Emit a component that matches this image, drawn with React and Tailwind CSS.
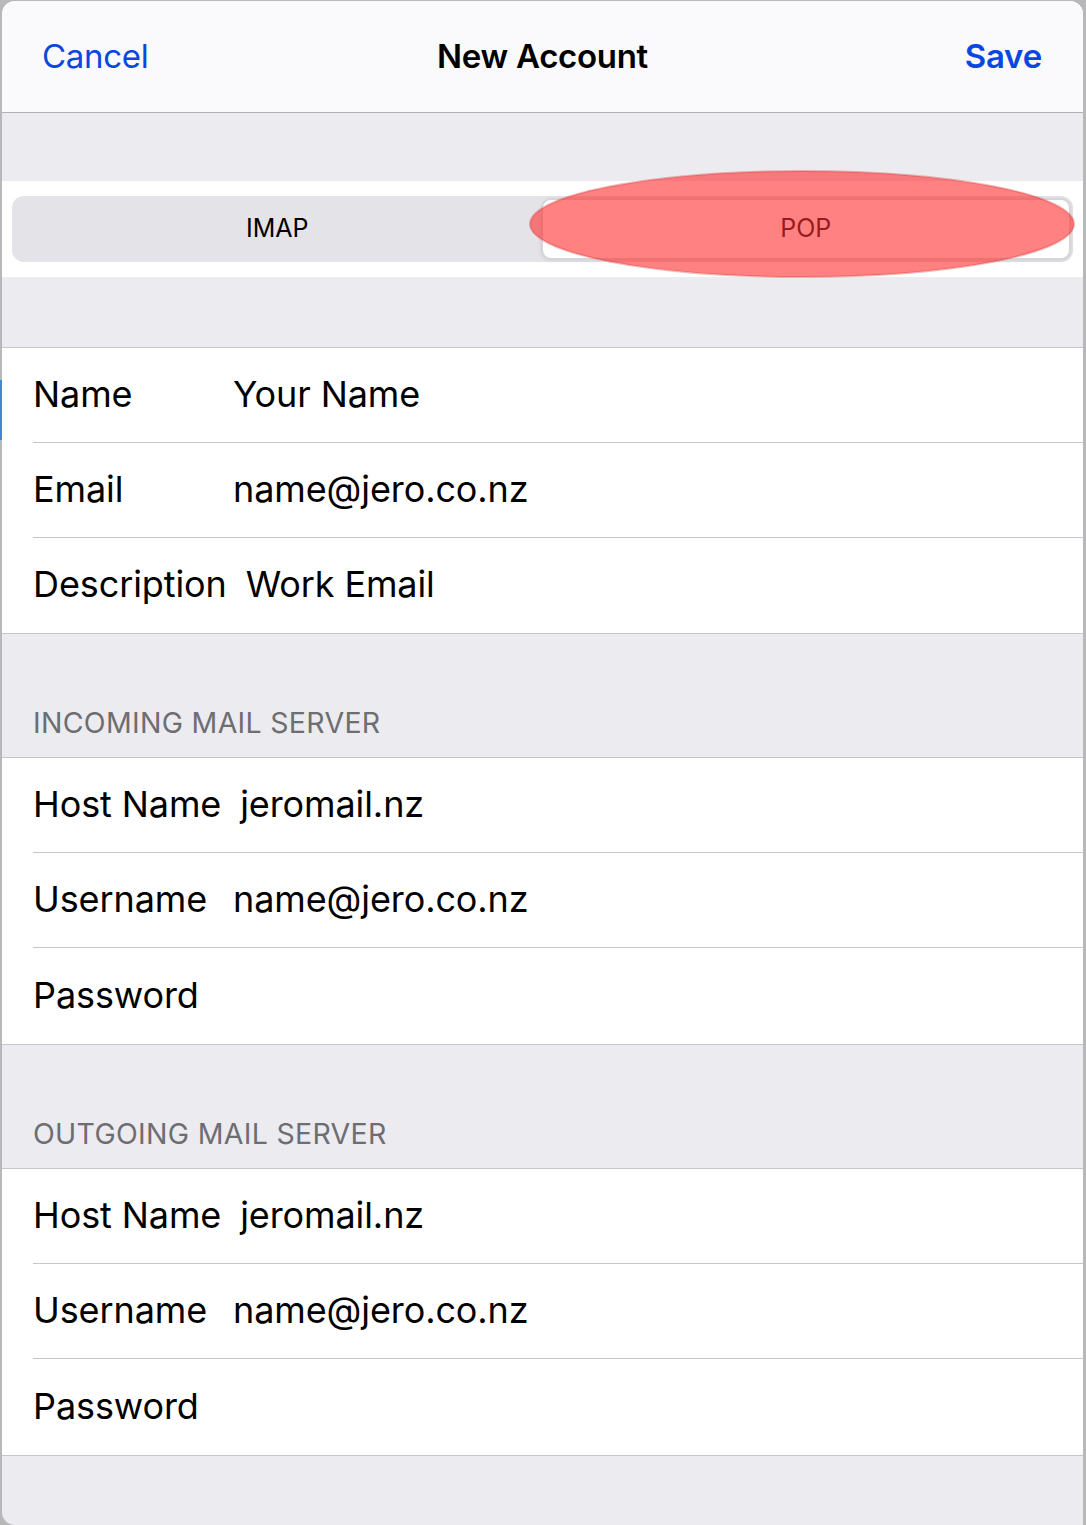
import React from 'react'

const font = { fontFamily: 'Inter, "Noto Sans", sans-serif' }

const Row = ({ label, value, last, tall }) => (
    <div className="pl-[31px] bg-white">
        <div className={`${tall ? 'h-[96px]' : 'h-[95px]'} flex items-center pb-[3px] ${last ? '' : 'border-b border-[#c6c6c8]'}`}>
            <span className="min-w-[181px] mr-[19px] text-[36px] text-black whitespace-nowrap tracking-[-0.1px]">{label}</span>
            <span className="text-[36px] text-black whitespace-nowrap tracking-[-0.1px]">{value}</span>
        </div>
    </div>
)

const Group = ({ rows, tallLast }) => (
    <div className="border-t border-b border-[#c6c6c8]">
        {rows.map((r, i) => (
            <Row
                key={r[0]}
                label={r[0]}
                value={r[1]}
                last={i === rows.length - 1}
                tall={tallLast && i === rows.length - 1}
            />
        ))}
    </div>
)

const SectionHeader = ({ children }) => (
    <div className="h-[123px] flex items-end pl-[31px] pb-[12px]">
        <span className="text-[28.5px] text-[#6d6d72] tracking-[0.3px]">{children}</span>
    </div>
)

export default function App() {
    return (
        <div className="w-[1086px] h-[1525px] bg-[#b8b8ba] flex overflow-hidden" style={font}>
            <div className="w-[2px] shrink-0 flex flex-col">
                <div className="h-[380px]" />
                <div className="h-[60px] bg-[#3d86d8]" />
            </div>
            <div className="w-[1081px] mt-[1px] bg-[#ebebf0] rounded-t-[13px] rounded-bl-[13px] overflow-hidden flex flex-col">
                <div className="h-[112px] bg-[#fafafc] border-b border-[#b1b1b3] flex items-center justify-between pl-[40px] pr-[41px] relative">
                    <span className="text-[33px] text-[#0a47e0] tracking-[-0.3px]">Cancel</span>
                    <span className="absolute left-0 right-0 text-center text-[33px] font-semibold text-black pointer-events-none tracking-[-0.3px]">New Account</span>
                    <span className="text-[33px] font-semibold text-[#0a47e0] tracking-[-0.2px]">Save</span>
                </div>
                <div className="h-[68px]" />
                <div className="h-[96px] bg-white px-[10px] flex items-center relative">
                    <div className="w-full h-[66px] bg-[#e3e3e8] rounded-[12px] flex p-[2px]">
                        <div className="flex-1 flex items-center justify-center text-[25px] text-black">IMAP</div>
                        <div className="flex-1 flex items-center justify-center text-[25px] text-black bg-white rounded-[10px] border-[2px] border-[#d6d6d8] shadow-[0_1px_4px_rgba(0,0,0,0.08)]">POP</div>
                    </div>
                    <svg className="absolute left-[526px] top-[-12px] pointer-events-none" width="548" height="110" viewBox="0 0 548 110">
                        <ellipse cx="274" cy="55" rx="272" ry="53" fill="rgba(255,45,45,0.6)" stroke="rgba(215,60,60,0.35)" strokeWidth="2" />
                    </svg>
                </div>
                <div className="h-[70px]" />
                <Group rows={[['Name', 'Your Name'], ['Email', 'name@jero.co.nz'], ['Description', 'Work Email']]} />
                <SectionHeader>INCOMING MAIL SERVER</SectionHeader>
                <Group tallLast rows={[['Host Name', 'jeromail.nz'], ['Username', 'name@jero.co.nz'], ['Password', '']]} />
                <SectionHeader>OUTGOING MAIL SERVER</SectionHeader>
                <Group tallLast rows={[['Host Name', 'jeromail.nz'], ['Username', 'name@jero.co.nz'], ['Password', '']]} />
                <div className="flex-1" />
            </div>
        </div>
    )
}
